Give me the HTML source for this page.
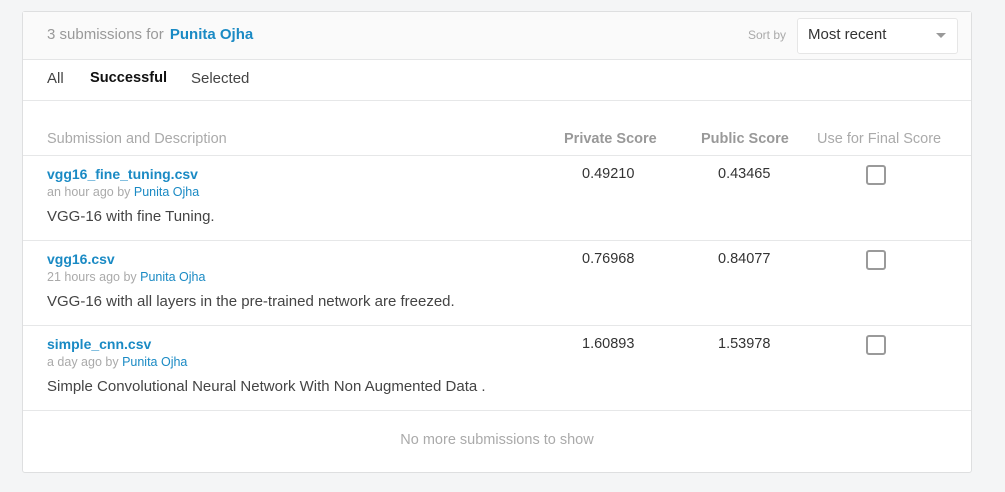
<!DOCTYPE html>
<html><head><style>
body{margin:0;width:1005px;height:492px;background:#f4f5f6;font-family:"Liberation Sans",sans-serif;position:relative;overflow:hidden}
.card{position:absolute;left:22px;top:11px;width:948px;height:460px;background:#fff;border:1px solid #dedfe0;border-radius:3px}
.hdr{position:absolute;left:0;top:0;width:948px;height:47px;background:#fafafa;border-bottom:1px solid #e4e5e6}
.a{position:absolute;white-space:nowrap}
.blue{color:#1a8ac4}
.line{position:absolute;left:0;width:948px;height:1px;background:#e6e7e8}
.cb{position:absolute;width:16px;height:16px;border:2px solid #9a9a9a;border-radius:3px}
.fn{font-size:14px;font-weight:bold}
.meta{font-size:12.5px;color:#aaa}
.desc{font-size:15px;color:#444}
</style></head><body>
<div class="card">
<div class="hdr">
<div class="a" style="left:24px;top:14px;font-size:15px;color:#999">3 submissions for <span class="blue" style="font-weight:bold;margin-left:2px">Punita Ojha</span></div>
<div class="a" style="left:725px;top:16px;font-size:12px;color:#aaa">Sort by</div>
<div class="a" style="left:774px;top:6px;width:159px;height:34px;border:1px solid #e6e6e6;border-radius:3px;background:#fff"></div>
<div class="a" style="left:785px;top:14px;font-size:15px;color:#333">Most recent</div>
<div class="a" style="left:913px;top:21px;width:0;height:0;border-left:5px solid transparent;border-right:5px solid transparent;border-top:5px solid #999"></div>
</div>
<div class="a" style="left:24px;top:58px;font-size:15px;color:#444">All</div>
<div class="a" style="left:67px;top:58px;font-size:14.6px;line-height:17px;color:#111;font-weight:bold">Successful</div>
<div class="a" style="left:168px;top:58px;font-size:15px;color:#444">Selected</div>
<div class="line" style="top:88px"></div>
<div class="a" style="left:24px;top:119px;font-size:14.5px;color:#aaa">Submission and Description</div>
<div class="a" style="left:541px;top:119px;font-size:14.5px;color:#999;font-weight:bold">Private Score</div>
<div class="a" style="left:678px;top:119px;font-size:14.5px;color:#999;font-weight:bold">Public Score</div>
<div class="a" style="left:794px;top:119px;font-size:14.5px;color:#aaa">Use for Final Score</div>
<div class="line" style="top:143px"></div>

<div class="a blue fn" style="left:24px;top:154px">vgg16_fine_tuning.csv</div>
<div class="a meta" style="left:24px;top:173px">an hour ago by <span class="blue">Punita Ojha</span></div>
<div class="a desc" style="left:24px;top:196px">VGG-16 with fine Tuning.</div>
<div class="a" style="left:559px;top:154px;font-size:14.5px;color:#333">0.49210</div>
<div class="a" style="left:695px;top:154px;font-size:14.5px;color:#333">0.43465</div>
<div class="cb" style="left:843px;top:153px"></div>
<div class="line" style="top:228px"></div>

<div class="a blue fn" style="left:24px;top:239px">vgg16.csv</div>
<div class="a meta" style="left:24px;top:258px">21 hours ago by <span class="blue">Punita Ojha</span></div>
<div class="a desc" style="left:24px;top:281px">VGG-16 with all layers in the pre-trained network are freezed.</div>
<div class="a" style="left:559px;top:239px;font-size:14.5px;color:#333">0.76968</div>
<div class="a" style="left:695px;top:239px;font-size:14.5px;color:#333">0.84077</div>
<div class="cb" style="left:843px;top:238px"></div>
<div class="line" style="top:313px"></div>

<div class="a blue fn" style="left:24px;top:324px">simple_cnn.csv</div>
<div class="a meta" style="left:24px;top:343px">a day ago by <span class="blue">Punita Ojha</span></div>
<div class="a desc" style="left:24px;top:366px">Simple Convolutional Neural Network With Non Augmented Data .</div>
<div class="a" style="left:559px;top:324px;font-size:14.5px;color:#333">1.60893</div>
<div class="a" style="left:695px;top:324px;font-size:14.5px;color:#333">1.53978</div>
<div class="cb" style="left:843px;top:323px"></div>
<div class="line" style="top:398px"></div>

<div class="a" style="left:0;width:948px;text-align:center;top:420px;font-size:14.5px;color:#aaa">No more submissions to show</div>
</div>
</body></html>
